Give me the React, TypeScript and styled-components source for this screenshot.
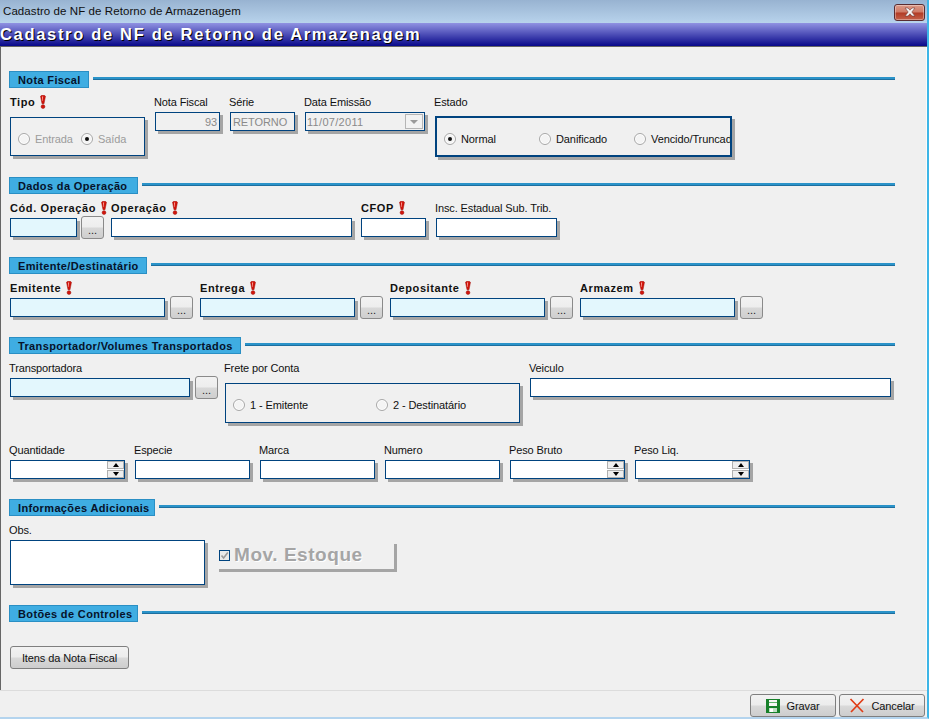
import React from 'react'
import styled, { createGlobalStyle } from 'styled-components'

const GlobalStyle = createGlobalStyle`
  html, body {
    margin: 0;
    padding: 0;
    background: #f0f0f0;
  }
  * {
    box-sizing: border-box;
  }
`

const Window = styled.div`
  width: 929px;
  height: 719px;
  display: flex;
  flex-direction: column;
  overflow: hidden;
  font-family: "Liberation Sans", Arial, sans-serif;
  font-size: 11px;
  color: #111;
  background: #f0f0f0;
  border-right: 2px solid #3db5e6;
  border-bottom: 2px solid #b4d4ee;
`

const TitleBar = styled.div`
  height: 23px;
  flex: none;
  display: flex;
  align-items: center;
  justify-content: space-between;
  padding: 0 2px 2px 3px;
  background: linear-gradient(#98b3d1, #b8d3ec);
  font-size: 11.5px;
  letter-spacing: 0.08px;
  color: #101010;
`

const CloseButton = styled.div`
  width: 31px;
  height: 17px;
  margin-top: 3px;
  display: flex;
  align-items: center;
  justify-content: center;
  border: 1px solid #5a2c30;
  border-radius: 3px;
  background: linear-gradient(#dc9a88 0%, #cf7a66 48%, #b13a24 52%, #c4614a 100%);
  box-shadow: inset 0 0 0 1px rgba(255, 255, 255, 0.35);
`

const Banner = styled.div`
  height: 24px;
  flex: none;
  display: flex;
  align-items: center;
  background: linear-gradient(#9092e2, #08088a);
  border-bottom: 1px solid #666;
  font-size: 16.5px;
  font-weight: 700;
  letter-spacing: 1.68px;
  color: #fff;
  text-shadow: 1px 1px 0 #000;
  white-space: nowrap;
`

const Content = styled.div`
  flex: 1;
  padding: 24px 0 0 0;
  border-left: 1px solid #666;
  border-right: 1px solid #fbfbfb;
`

const SectionHeader = styled.div<{ $top?: number }>`
  display: flex;
  align-items: center;
  gap: 4px;
  height: 17px;
  margin: ${(p) => p.$top ?? 0}px 31px 0 8px;
`

const SectionTitle = styled.div<{ $width: number }>`
  width: ${(p) => p.$width}px;
  flex: none;
  height: 17px;
  padding: 0 0 0 8px;
  display: flex;
  align-items: center;
  background: #3fade2;
  border: 1px solid #2a8fc4;
  font-size: 11px;
  font-weight: 700;
  letter-spacing: 0.36px;
  color: #06122a;
  white-space: nowrap;
`

const SectionLine = styled.div`
  flex: 1;
  height: 3px;
  margin-bottom: 2px;
  background: #2a93c9;
  border-bottom: 1px solid #1d6f9f;
`

const Row = styled.div<{ $top?: number; $gap?: number }>`
  display: flex;
  align-items: flex-start;
  gap: ${(p) => p.$gap ?? 10}px;
  margin-top: ${(p) => p.$top ?? 7}px;
  padding-left: 9px;
`

const Field = styled.div<{ $width: number; $left?: number }>`
  width: ${(p) => p.$width}px;
  flex: none;
  margin-left: ${(p) => p.$left ?? 0}px;
`

const Label = styled.div<{ $bold?: boolean }>`
  height: 17px;
  display: flex;
  align-items: center;
  gap: 5px;
  padding-bottom: 4px;
  margin-left: ${(p) => (p.$bold ? 0 : -1)}px;
  font-weight: ${(p) => (p.$bold ? 700 : 400)};
  letter-spacing: ${(p) => (p.$bold ? '0.6px' : '-0.12px')};
  white-space: nowrap;
  svg {
    flex: none;
    margin-top: 1px;
  }
`

const TextInput = styled.input<{ $tint?: boolean; $right?: boolean }>`
  display: block;
  width: 100%;
  height: 19px;
  padding: 0 2px;
  border: 1px solid #00437f;
  border-radius: 0;
  outline: none;
  background: ${(p) => (p.$tint ? '#e3f7fd' : '#fff')};
  box-shadow: 3px 3px 0 #a5a5a5;
  font: 11px "Liberation Sans", Arial, sans-serif;
  text-align: ${(p) => (p.$right ? 'right' : 'left')};
  &:read-only {
    color: #8a8a8a;
  }
`

const DisabledInput = styled(TextInput)`
  background: #f0f0f0;
  letter-spacing: -0.1px;
`

const Combo = styled.div`
  height: 19px;
  display: flex;
  align-items: center;
  justify-content: space-between;
  padding: 0 1px 0 1px;
  border: 1px solid #00437f;
  background: #f0f0f0;
  box-shadow: 3px 3px 0 #a5a5a5;
  color: #8a8a8a;
  letter-spacing: 0.3px;
`

const ComboArrow = styled.div`
  width: 18px;
  height: 15px;
  display: flex;
  align-items: center;
  justify-content: center;
  border: 1px solid #b5b5b5;
  background: #f2f2f2;
  &::after {
    content: '';
    border-left: 4px solid transparent;
    border-right: 4px solid transparent;
    border-top: 4px solid #9a9a9a;
  }
`

const Lookup = styled.button`
  width: 23px;
  height: 23px;
  flex: none;
  margin: 15px 0 0 0;
  padding: 4px 0 0 0;
  border: 1px solid #8a8a8a;
  border-radius: 3px;
  background: linear-gradient(#f2f2f2 0%, #ededed 48%, #d8d8d8 52%, #cfcfcf 100%);
  font: 11px "Liberation Sans", Arial, sans-serif;
  color: #222;
`

const RadioBox = styled.div<{ $width: number; $height: number; $top: number; $thick?: boolean }>`
  width: ${(p) => p.$width}px;
  height: ${(p) => p.$height}px;
  margin-top: ${(p) => p.$top}px;
  display: flex;
  align-items: center;
  padding: 4px 0 0 7px;
  border: ${(p) => (p.$thick ? 2 : 1)}px solid #00437f;
  box-shadow: 3px 3px 0 #a5a5a5;
  overflow: hidden;
  white-space: nowrap;
`

const RadioItem = styled.div<{ $width?: number; $muted?: boolean }>`
  display: flex;
  align-items: center;
  gap: 5px;
  flex: none;
  width: ${(p) => (p.$width ? `${p.$width}px` : 'auto')};
  letter-spacing: -0.1px;
  color: ${(p) => (p.$muted ? '#9c9c9c' : '#111')};
`

const RadioDot = styled.span<{ $on?: boolean }>`
  width: 12px;
  height: 12px;
  flex: none;
  display: flex;
  align-items: center;
  justify-content: center;
  border-radius: 50%;
  border: 1px solid #a8a8a8;
  background: #f4f4f4;
  box-shadow: inset 0 0 0 1px #fff;
  &::after {
    content: '';
    display: ${(p) => (p.$on ? 'block' : 'none')};
    width: 4px;
    height: 4px;
    border-radius: 50%;
    background: #111;
  }
`

const SpinWrap = styled.div`
  position: relative;
`

const SpinButtons = styled.div`
  position: absolute;
  top: 1px;
  right: 1px;
  width: 17px;
  height: 17px;
  display: flex;
  flex-direction: column;
  gap: 1px;
`

const SpinPart = styled.div<{ $down?: boolean }>`
  flex: 1;
  display: flex;
  align-items: center;
  justify-content: center;
  border: 1px solid #b0b0b0;
  background: #efefef;
  &::after {
    content: '';
    border-left: 3.5px solid transparent;
    border-right: 3.5px solid transparent;
    ${(p) => (p.$down ? 'border-top: 4px solid #000;' : 'border-bottom: 4px solid #000;')}
  }
`

const ObsInput = styled.textarea`
  display: block;
  width: 195px;
  height: 45px;
  padding: 2px;
  border: 1px solid #00437f;
  border-radius: 0;
  outline: none;
  resize: none;
  background: #fff;
  box-shadow: 3px 3px 0 #a5a5a5;
`

const StockCheck = styled.div`
  width: 178px;
  height: 28px;
  margin: 21px 0 0 4px;
  display: flex;
  align-items: center;
  gap: 4px;
  padding-bottom: 3px;
  border-right: 3px solid #a5a5a5;
  border-bottom: 3px solid #a5a5a5;
  font-size: 19px;
  font-weight: 700;
  letter-spacing: 0.55px;
  color: #a5a5a5;
  text-shadow: 1px 1px 0 #fff;
  white-space: nowrap;
`

const CheckMark = styled.span`
  width: 11px;
  height: 11px;
  flex: none;
  display: flex;
  border: 1px solid #00437f;
  background: #e9e9e9;
`

const ActionButton = styled.button<{ $width: number }>`
  width: ${(p) => p.$width}px;
  height: 23px;
  display: flex;
  align-items: center;
  justify-content: center;
  gap: 6px;
  padding: 0;
  border: 1px solid #7f7f7f;
  border-radius: 3px;
  background: linear-gradient(#f2f2f2 0%, #ececec 48%, #d9d9d9 52%, #cdcdcd 100%);
  font: 11px "Liberation Sans", Arial, sans-serif;
  letter-spacing: -0.1px;
  color: #111;
`

const ItemsRow = styled.div`
  margin: 24px 0 0 9px;
`

const Footer = styled.div`
  height: 27px;
  flex: none;
  display: flex;
  justify-content: flex-end;
  align-items: flex-start;
  gap: 3px;
  padding: 3px 2px 0 0;
  border-top: 1px solid #dcdcdc;
`

const Required = () => (
  <svg width="6" height="14" viewBox="0 0 6 14">
    <path d="M.6 1.6C.6.6 1.6.2 3 .2s2.4.4 2.4 1.4L4 8.8H2Z" fill="#d2150c" stroke="#9a0f08" strokeWidth=".5" />
    <circle cx="3" cy="11.6" r="1.9" fill="#d2150c" stroke="#9a0f08" strokeWidth=".5" />
    <path d="M2 1.6h1.1l-.3 4.5h-.4Z" fill="#f9a79f" />
  </svg>
)

const Spin = (props: { width: number }) => (
  <SpinWrap>
    <TextInput style={{ width: props.width }} />
    <SpinButtons>
      <SpinPart />
      <SpinPart $down />
    </SpinButtons>
  </SpinWrap>
)

const Section = (props: { title: string; width: number; top?: number }) => (
  <SectionHeader $top={props.top}>
    <SectionTitle $width={props.width}>{props.title}</SectionTitle>
    <SectionLine />
  </SectionHeader>
)

const App = () => {
  return (
    <Window>
      <GlobalStyle />
      <TitleBar>
        Cadastro de NF de Retorno de Armazenagem
        <CloseButton>
          <svg width="14" height="10" viewBox="0 0 14 10">
            <path d="M2 1h3l2 2.2L9 1h3L8.8 5 12 9H9L7 6.8 5 9H2l3.2-4Z" fill="#f5f5f5" stroke="#6e3a35" strokeWidth=".6" />
          </svg>
        </CloseButton>
      </TitleBar>
      <Banner>Cadastro de NF de Retorno de Armazenagem</Banner>
      <Content>
        <Section title="Nota Fiscal" width={80} />
        <Row>
          <Field $width={135}>
            <Label $bold>Tipo <Required /></Label>
            <RadioBox $width={135} $height={39} $top={5}>
              <RadioItem $width={63} $muted><RadioDot />Entrada</RadioItem>
              <RadioItem $muted><RadioDot $on />Saída</RadioItem>
            </RadioBox>
          </Field>
          <Field $width={65}>
            <Label>Nota Fiscal</Label>
            <DisabledInput readOnly value="93" $right />
          </Field>
          <Field $width={65}>
            <Label>Série</Label>
            <DisabledInput readOnly value="RETORNO" />
          </Field>
          <Field $width={120}>
            <Label>Data Emissão</Label>
            <Combo>11/07/2011<ComboArrow /></Combo>
          </Field>
          <Field $width={297}>
            <Label>Estado</Label>
            <RadioBox $width={297} $height={41} $top={4} $thick>
              <RadioItem $width={95}><RadioDot $on />Normal</RadioItem>
              <RadioItem $width={95}><RadioDot />Danificado</RadioItem>
              <RadioItem><RadioDot />Vencido/Truncado</RadioItem>
            </RadioBox>
          </Field>
        </Row>

        <Section title="Dados da Operação" width={129} top={20} />
        <Row $gap={4}>
          <Field $width={67}>
            <Label $bold>Cód. Operação <Required /></Label>
            <TextInput $tint />
          </Field>
          <Lookup>...</Lookup>
          <Field $width={241} $left={3}>
            <Label $bold>Operação <Required /></Label>
            <TextInput />
          </Field>
          <Field $width={65} $left={5}>
            <Label $bold>CFOP <Required /></Label>
            <TextInput />
          </Field>
          <Field $width={121} $left={6}>
            <Label>Insc. Estadual Sub. Trib.</Label>
            <TextInput />
          </Field>
        </Row>

        <Section title="Emitente/Destinatário" width={138} top={18} />
        <Row $gap={5}>
          <Field $width={155}>
            <Label $bold>Emitente <Required /></Label>
            <TextInput $tint />
          </Field>
          <Lookup>...</Lookup>
          <Field $width={155} $left={2}>
            <Label $bold>Entrega <Required /></Label>
            <TextInput $tint />
          </Field>
          <Lookup>...</Lookup>
          <Field $width={155} $left={2}>
            <Label $bold>Depositante <Required /></Label>
            <TextInput $tint />
          </Field>
          <Lookup>...</Lookup>
          <Field $width={155} $left={2}>
            <Label $bold>Armazem <Required /></Label>
            <TextInput $tint />
          </Field>
          <Lookup>...</Lookup>
        </Row>

        <Section title="Transportador/Volumes Transportados" width={232} top={18} />
        <Row $gap={5}>
          <Field $width={180}>
            <Label>Transportadora</Label>
            <TextInput $tint />
          </Field>
          <Lookup>...</Lookup>
          <Field $width={295} $left={2}>
            <Label>Frete por Conta</Label>
            <RadioBox $width={295} $height={40} $top={5}>
              <RadioItem $width={143}><RadioDot />1 - Emitente</RadioItem>
              <RadioItem><RadioDot />2 - Destinatário</RadioItem>
            </RadioBox>
          </Field>
          <Field $width={361} $left={5}>
            <Label>Veiculo</Label>
            <TextInput />
          </Field>
        </Row>
        <Row $top={20}>
          <Field $width={115}>
            <Label>Quantidade</Label>
            <Spin width={115} />
          </Field>
          <Field $width={115}>
            <Label>Especie</Label>
            <TextInput />
          </Field>
          <Field $width={115}>
            <Label>Marca</Label>
            <TextInput />
          </Field>
          <Field $width={115}>
            <Label>Numero</Label>
            <TextInput />
          </Field>
          <Field $width={115}>
            <Label>Peso Bruto</Label>
            <Spin width={115} />
          </Field>
          <Field $width={115}>
            <Label>Peso Liq.</Label>
            <Spin width={115} />
          </Field>
        </Row>

        <Section title="Informações Adicionais" width={146} top={20} />
        <Row>
          <Field $width={195}>
            <Label>Obs.</Label>
            <ObsInput />
          </Field>
          <StockCheck>
            <CheckMark>
              <svg width="9" height="9" viewBox="0 0 9 9">
                <path d="M1.5 4.5 3.6 7 7.8 1.6" fill="none" stroke="#9a9a9a" strokeWidth="1.6" />
              </svg>
            </CheckMark>
            Mov. Estoque
          </StockCheck>
        </Row>

        <Section title="Botões de Controles" width={129} top={20} />
        <ItemsRow>
          <ActionButton $width={119}>Itens da Nota Fiscal</ActionButton>
        </ItemsRow>
      </Content>
      <Footer>
        <ActionButton $width={86}>
          <svg width="14" height="14" viewBox="0 0 14 14">
            <path d="M0 0h14v14H0Z" fill="#17802a" />
            <path d="M3 1h8v6H3Z" fill="#f6f6f6" />
            <path d="M3 3.5h8" stroke="#5fb56c" strokeWidth="1" />
            <path d="M3 9h8v4H3Z" fill="#bfe0c4" />
            <path d="M4 9.5h3v3.5H4Z" fill="#fff" />
          </svg>
          Gravar
        </ActionButton>
        <ActionButton $width={86}>
          <svg width="16" height="15" viewBox="0 0 16 15">
            <path d="M1.5 1 14 14M14.5 1 2 14" stroke="#e03c16" strokeWidth="1.7" fill="none" />
          </svg>
          Cancelar
        </ActionButton>
      </Footer>
    </Window>
  )
}

export default App
